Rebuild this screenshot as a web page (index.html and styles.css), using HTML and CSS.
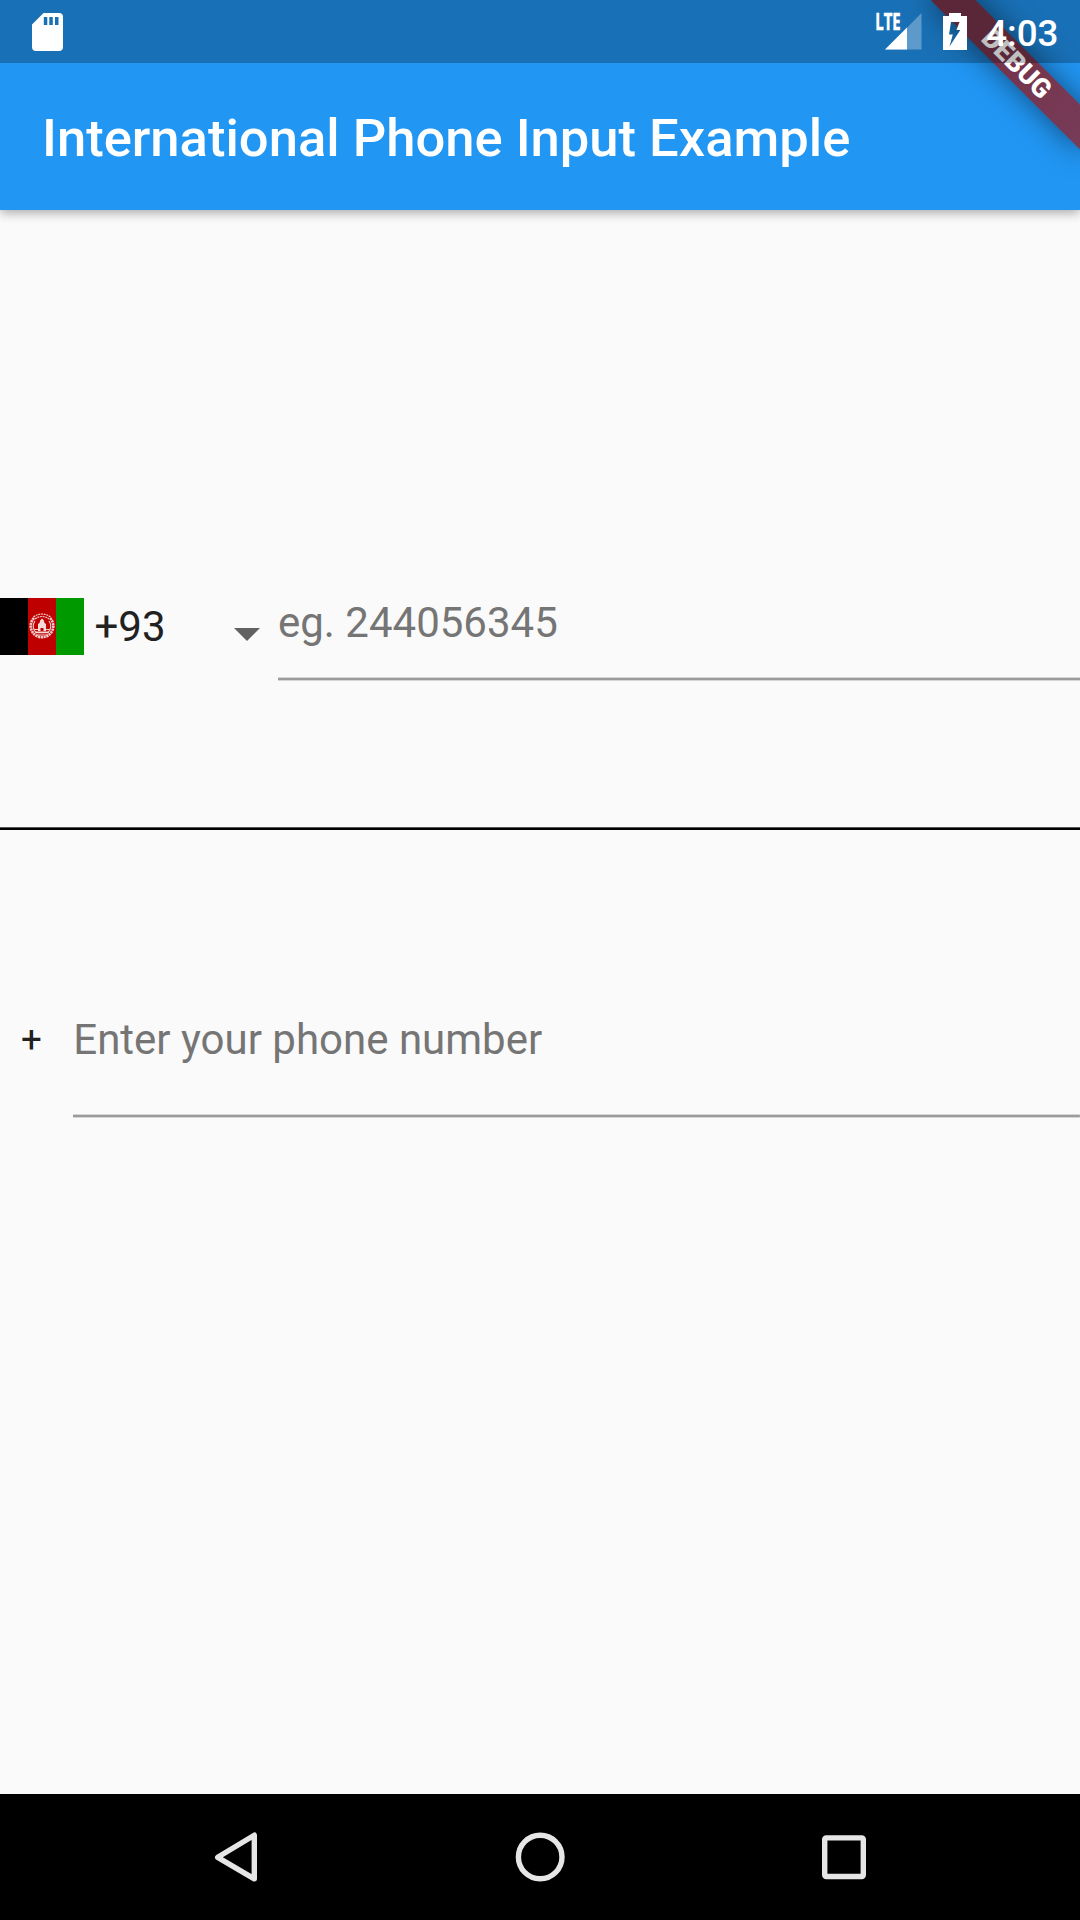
FILE: index.html
```html
<!DOCTYPE html>
<html lang="en">
<head>
<meta charset="utf-8">
<title>International Phone Input Example</title>
<link rel="stylesheet" href="styles.css">
</head>
<body>
<div class="screen">
  <header class="app-bar">
    <h1 class="title">International Phone Input Example</h1>
  </header>
  <main class="content">
    <div class="phone-row">
      <svg class="flag" width="84" height="57" viewBox="0 0 84 57">
        <path fill="#000" d="M0 0h28v57H0z"/>
        <path fill="#bf0000" d="M28 0h28v57H28z"/>
        <path fill="#090" d="M56 0h28v57H56z"/>
        <g fill="none" stroke="#fff" opacity=".8">
          <path stroke-width="2.6" stroke-dasharray="2.2 .6" d="M34 20a11.300 11.300 0 1 0 16 0"/>
          <path stroke-width="1.2" stroke-dasharray="2 .7" d="M33.500 19q8.500-6 17 0M35 21q7-5 14 0"/>
          <path stroke-width="1.200" d="M35 23a8.500 8.500 0 0 0 1 11.500M49 23a8.500 8.500 0 0 1-1 11.500M36 37h12M34.500 31.500h4M45.500 31.500h4"/>
        </g>
        <path fill="#fff" opacity=".85" d="M38 33v-7l1.500-1q0-3 2.500-4.500 2.500 1.500 2.500 4.500l1.500 1v7h-2.500v-3h-3v3zM35.500 33.500h13v1.800h-13z"/>
      </svg>
      <span class="code">+93</span>
      <svg class="arrow" width="26" height="13" viewBox="0 0 26 13"><path fill="#616161" d="M0 0h26L13 13z"/></svg>
      <div class="field field-first">eg. 244056345</div>
    </div>
    <div class="divider"></div>
    <div class="second-row">
      <span class="plus">+</span>
      <div class="field field-second">Enter your phone number</div>
    </div>
  </main>
  <nav class="nav-bar">
    <svg class="nav-icons" width="1080" height="126" viewBox="0 0 1080 126" fill="none" stroke="#e6e6e6" stroke-width="5.400" stroke-linejoin="round">
      <path d="M254.300 41.200v43.600L217.700 63.300z"/>
      <circle cx="540.200" cy="63" r="21.800"/>
      <rect x="824.700" y="43.900" width="38.600" height="38.600" rx="1.500"/>
    </svg>
  </nav>
  <div class="banner-clip"><div class="banner">DEBUG</div></div>
  <div class="status-bar">
    <svg width="31" height="38" viewBox="0 0 31 38" class="sd"><path fill="#fff" fill-rule="evenodd" d="M11.500 0H27q4 0 4 4v30q0 4-4 4H4q-4 0-4-4V11.500zM11.800 4v8h3.500V4zM17.300 4v8h3.500V4zM23 4v8h3.500V4z"/></svg>
    <svg width="46" height="37" viewBox="0 0 46 37" class="signal">
      <path fill="#fff" fill-opacity=".3" d="M45.500 0v36.500H9.500z"/>
      <path fill="#fff" d="M31 14.500v22H9z"/>
      <text class="lte" x="-.8" y="16.500" textLength="25.500" lengthAdjust="spacingAndGlyphs">LTE</text>
    </svg>
    <svg width="24" height="37" viewBox="0 0 24 37" class="battery"><path fill="#fff" fill-rule="evenodd" d="M6 0h12v3h6v34H0V3h6zM8 9L6 21.500h3.800L6.500 33.500 17.300 17h-3.800L16.500 9z"/></svg>
    <span class="time">4:03</span>
  </div>
</div>
</body>
</html>
```
FILE: styles.css
```css
* { box-sizing: border-box; }
body { margin: 0; font-family: Roboto, sans-serif; }
.screen {
  position: relative;
  width: 1080px;
  height: 1920px;
  display: flex;
  flex-direction: column;
  overflow: hidden;
  background: #fafafa;
}
.app-bar {
  height: 210px;
  flex: none;
  padding: 65px 42px 0;
  display: flex;
  align-items: center;
  background: #2196f3;
  box-shadow: 0 3px 10px rgba(0,0,0,.32);
}
.title {
  margin: 0;
  color: #fff;
  font-size: 52.550px;
  font-weight: 500;
  line-height: 62px;
  white-space: nowrap;
}
.content { flex: 1; display: flex; flex-direction: column; }
.phone-row { display: flex; margin-top: 388px; height: 83px; align-items: flex-start; }
.flag { flex: none; }
.code { width: 139px; margin-left: 10.500px; padding-top: 4px; color: #212121; font-size: 42px; line-height: 50px; }
.arrow { flex: none; margin: 30px 0 0 .5px; }
.field {
  flex: 1;
  color: #757575;
  font-size: 42px;
  line-height: 50px;
  background: linear-gradient(#d5d5d5 1px, #9b9b9b 1px 3px, #d5d5d5 3px) bottom / 100% 4px no-repeat;
}
.field-first { margin-left: 18px; height: 83px; }
.divider { height: 3px; margin-top: 146px; background: linear-gradient(#555 1px, #000 1px); }
.second-row { display: flex; margin-top: 185px; height: 103px; }
.plus { width: 73.300px; padding: 3px 0 0 21px; color: #212121; font-size: 36.750px; line-height: 43px; }
.nav-bar { height: 126px; flex: none; background: #000; }
.nav-icons { display: block; }
.banner-clip {
  position: absolute;
  top: 0;
  right: 0;
  width: 260px;
  height: 210px;
  overflow: hidden;
}
.banner {
  position: absolute;
  left: 155px;
  top: 73.500px;
  width: 210px;
  height: 31.500px;
  transform: rotate(45deg);
  transform-origin: 105px -73.500px;
  background: linear-gradient(90deg, rgba(132,42,58,.9), rgba(123,46,66,.94) 50%, rgba(128,50,72,.9));
  box-shadow: 0 0 30px rgba(0,0,0,.5);
  color: #fff;
  font-size: 26.775px;
  font-weight: 900;
  line-height: 32.500px;
  text-align: center;
}
.status-bar {
  position: absolute;
  inset: 0 0 auto;
  height: 63px;
  display: flex;
  align-items: flex-start;
  padding: 12.500px 21.500px 0 32.300px;
  background: rgba(0,0,0,.25);
  color: #fff;
}
.signal { margin: .5px 21.500px 0 auto; overflow: visible; }
.lte { fill: #fff; stroke: #fff; stroke-width: .5px; font: 700 22.500px "Open Sans", sans-serif; }
.time { margin: -.5px 0 0 19px; font-size: 36.750px; font-weight: 500; line-height: 43px; }
```
